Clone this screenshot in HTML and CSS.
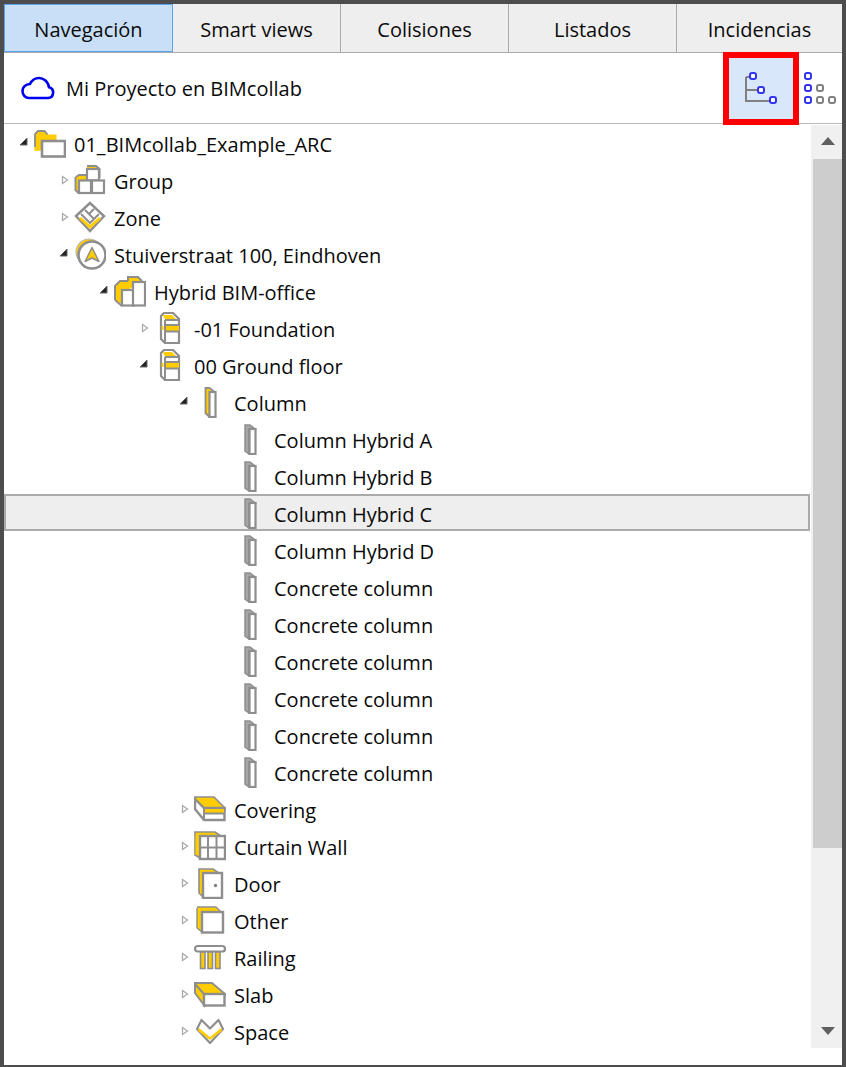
FILE: index.html
```html
<!DOCTYPE html>
<html lang="es">
<head>
  <meta charset="UTF-8">
  <meta name="viewport" content="width=device-width, initial-scale=1.0">
  <title>Navegación - BIMcollab</title>
  <link rel="stylesheet" href="styles.css">
</head>
<body>
  <!-- iconos del árbol -->
  <svg class="defs" width="0" height="0" aria-hidden="true">
    <symbol id="open" viewBox="0 0 16 16"><path d="M9 3v7H2z" fill="#222" stroke="#666" stroke-width="1"/></symbol>
    <symbol id="closed" viewBox="0 0 16 16"><path d="M4.500 4.500l5 3.500-5 3.500z" fill="#fff" stroke="#aaa" stroke-width="1.300"/></symbol>

    <symbol id="folder" viewBox="0 0 32 32">
      <path d="M0.500 24V7l3-3.500h7l3 4h9v7H8v9z" fill="#fc0"/>
      <path d="M1 20V7l3-3h6.500l3 3.500" fill="none" stroke="#8e8e8e" stroke-width="1.800"/>
      <rect x="8" y="14" width="23" height="15.500" fill="#fff" stroke="#8e8e8e" stroke-width="2.600"/>
    </symbol>
    <symbol id="group" viewBox="0 0 32 32">
      <path d="M1 26V13l4-2h8V3h10l3 3v8l-22 14z" fill="#fc0"/>
      <path d="M1.500 13v13l3 3M2 13l3-2h7M13 2h9l3.500 3v9" fill="none" stroke="#8e8e8e" stroke-width="2"/>
      <rect x="13" y="5" width="12" height="11.500" fill="#fff" stroke="#8e8e8e" stroke-width="2.200"/>
      <rect x="5" y="16.500" width="12" height="12.500" fill="#fff" stroke="#8e8e8e" stroke-width="2.200"/>
      <rect x="18" y="16.500" width="12" height="12.500" fill="#fff" stroke="#8e8e8e" stroke-width="2.200"/>
    </symbol>
    <symbol id="zone" viewBox="0 0 32 32">
      <path d="M2 15L16 2l14 13-14 15z" fill="#fff" stroke="#8e8e8e" stroke-width="2.400"/>
      <path d="M5 18l11 10 11-10-2-2-9 8-9-8z" fill="#fc0"/>
      <path d="M7 13l9 9 9-9M11 9l9 9M15 13l5-5" fill="none" stroke="#8e8e8e" stroke-width="2"/>
    </symbol>
    <symbol id="site" viewBox="0 0 32 32">
      <circle cx="15" cy="14" r="13" fill="#fc0" stroke="#bbb" stroke-width="1.200"/>
      <circle cx="18" cy="17" r="13.500" fill="#fff" stroke="#8e8e8e" stroke-width="2.600"/>
      <path d="M18 9.500l7 14-7-3.500-7 3.500z" fill="#fc0" stroke="#8e8e8e" stroke-width="1.400" stroke-linejoin="round"/>
    </symbol>
    <symbol id="building" viewBox="0 0 32 32">
      <path d="M1 11l5-5h9V1h9l4 5-14 9H9v15l-8-5z" fill="#fc0"/>
      <path d="M1 25V11l5-5h8M14 6V2h10l4 4M1 25l7 6" fill="none" stroke="#8e8e8e" stroke-width="2"/>
      <rect x="8" y="15" width="12" height="15.500" fill="#fff" stroke="#8e8e8e" stroke-width="2.200"/>
      <rect x="19" y="7" width="12" height="23.500" fill="#fff" stroke="#8e8e8e" stroke-width="2.200"/>
    </symbol>
    <symbol id="storey" viewBox="0 0 32 32">
      <path d="M7 27V4l3-3h9l6 6v24H11z" fill="#fff" stroke="#8e8e8e" stroke-width="2.200"/>
      <path d="M9 3h9l5 5H11z" fill="#fc0"/>
      <path d="M11 14h14v5H11z" fill="#fc0"/>
      <path d="M11 8h14M11 13h14M11 19.500h14M11 8v23" fill="none" stroke="#8e8e8e" stroke-width="2"/>
      <path d="M8.500 14v4" stroke="#fc0" stroke-width="2"/>
    </symbol>
    <symbol id="type" viewBox="0 0 32 32">
      <path d="M11.500 28V1.500h4l3 4H15v25z" fill="#fc0"/>
      <path d="M11.500 28V2h4l5 4M11.500 27l4 4" fill="none" stroke="#8e8e8e" stroke-width="1.800"/>
      <rect x="15.500" y="6" width="6" height="25" fill="#fff" stroke="#8e8e8e" stroke-width="2.200"/>
    </symbol>
    <symbol id="column" viewBox="0 0 32 32">
      <path d="M11 28V2h5l5 4H15v25z" fill="#a6a6a6" stroke="#8e8e8e" stroke-width="1.500"/>
      <rect x="15.500" y="6" width="6" height="25" fill="#fff" stroke="#8e8e8e" stroke-width="2.200"/>
    </symbol>
    <symbol id="covering" viewBox="0 0 32 32">
      <path d="M1 6V4h19l11 11v2H10z" fill="#fc0" stroke="#8e8e8e" stroke-width="1.600"/>
      <path d="M1 6v10l9 11h20.500V15H10z" fill="#fff" stroke="#8e8e8e" stroke-width="2.400"/>
      <path d="M10 16h20v4H10z" fill="#fc0"/>
      <path d="M10 15v12M10 20.500h20" fill="none" stroke="#8e8e8e" stroke-width="2"/>
    </symbol>
    <symbol id="curtain" viewBox="0 0 32 32">
      <path d="M1 25V2h20l6 4H6v22z" fill="#fc0" stroke="#8e8e8e" stroke-width="1.600"/>
      <rect x="6" y="6" width="25" height="23" fill="#fff" stroke="#8e8e8e" stroke-width="2.400"/>
      <path d="M14 6v23M22.500 6v23M6 17.500h25" fill="none" stroke="#8e8e8e" stroke-width="2"/>
      <path d="M3 5v20" stroke="#fc0" stroke-width="3"/>
    </symbol>
    <symbol id="door" viewBox="0 0 32 32">
      <path d="M5 26V2h14l6 4H9v24z" fill="#fc0" stroke="#8e8e8e" stroke-width="1.600"/>
      <rect x="9" y="6" width="19" height="25" fill="#fff" stroke="#8e8e8e" stroke-width="2.400"/>
      <circle cx="21.500" cy="18.500" r="1.700" fill="#808080"/>
    </symbol>
    <symbol id="other" viewBox="0 0 32 32">
      <path d="M3 24V3h19l6 5H8v20z" fill="#fc0"/>
      <path d="M3 24V4M3 3h19l5 5M3 24l5 4" fill="none" stroke="#8e8e8e" stroke-width="1.400"/>
      <rect x="8" y="8" width="21" height="20.500" fill="#fff" stroke="#8e8e8e" stroke-width="2.400"/>
    </symbol>
    <symbol id="railing" viewBox="0 0 32 32">
      <rect x="1" y="5" width="30" height="5.500" rx="2.700" fill="#fff" stroke="#8e8e8e" stroke-width="2.200"/>
      <rect x="6.500" y="11" width="4.500" height="16.500" fill="#fc0" stroke="#8e8e8e" stroke-width="1.600"/>
      <rect x="14" y="11" width="4.500" height="16.500" fill="#fc0" stroke="#8e8e8e" stroke-width="1.600"/>
      <rect x="21.500" y="11" width="4.500" height="16.500" fill="#fc0" stroke="#8e8e8e" stroke-width="1.600"/>
    </symbol>
    <symbol id="slab" viewBox="0 0 32 32">
      <path d="M1 6V5h17l13 11v1H10z" fill="#fc0" stroke="#8e8e8e" stroke-width="1.800"/>
      <path d="M1 6l9 10v11L1 15z" fill="#fc0" stroke="#8e8e8e" stroke-width="2"/>
      <rect x="10" y="16" width="20.500" height="11.500" fill="#fff" stroke="#8e8e8e" stroke-width="2.400"/>
    </symbol>
    <symbol id="space" viewBox="0 0 32 32">
      <path d="M3 14l4.500-9L16 13.500 24.500 5 29 14 16 28z" fill="#fff" stroke="#8e8e8e" stroke-width="2.200" stroke-linejoin="round"/>
      <path d="M4 16l12 9 12-9-1-3-11 9-11-9z" fill="#fc0"/>
    </symbol>
  </svg>

  <nav class="tabs">
    <div class="tab active">Navegación</div>
    <div class="tab">Smart views</div>
    <div class="tab">Colisiones</div>
    <div class="tab">Listados</div>
    <div class="tab last">Incidencias</div>
  </nav>

  <div class="toolbar">
    <svg class="cloud" width="34" height="24" viewBox="0 0 34 24">
      <path d="M8 22h19a5.500 5.500 0 0 0 1-10.800C27 5 22 2 18 2c-4 0-7 2-9 6-4.500 0-7.500 3.500-7.500 7S4 22 8 22z" fill="none" stroke="#0000f0" stroke-width="2.600"/>
    </svg>
    <span class="project">Mi Proyecto en BIMcollab</span>
    <button class="view-btn" type="button">
      <svg width="36" height="33" viewBox="0 0 36 33">
        <path d="M3 5v24h24M3 5h4M3 18h12" fill="none" stroke="#808080" stroke-width="2"/>
        <rect x="7" y="1" width="6" height="6" rx="2" fill="#fff" stroke="#3333ee" stroke-width="2"/>
        <rect x="15" y="15" width="6" height="6" rx="2" fill="#fff" stroke="#3333ee" stroke-width="2"/>
        <rect x="27" y="25" width="6" height="6" rx="2" fill="#fff" stroke="#3333ee" stroke-width="2"/>
      </svg>
    </button>
    <svg class="flat" width="36" height="33" viewBox="0 0 36 33">
      <rect x="2" y="1" width="6" height="6" rx="2" fill="#fff" stroke="#3333ee" stroke-width="2"/>
      <rect x="2" y="13" width="6" height="6" rx="2" fill="#fff" stroke="#3333ee" stroke-width="2"/>
      <rect x="14" y="13" width="6" height="6" rx="2" fill="#fff" stroke="#808080" stroke-width="2"/>
      <rect x="2" y="25" width="6" height="6" rx="2" fill="#fff" stroke="#3333ee" stroke-width="2"/>
      <rect x="14" y="25" width="6" height="6" rx="2" fill="#fff" stroke="#808080" stroke-width="2"/>
      <rect x="26" y="25" width="6" height="6" rx="2" fill="#fff" stroke="#808080" stroke-width="2"/>
    </svg>
  </div>

  <div class="content">
    <ul class="tree">
      <li class="row lvl0"><svg class="tog"><use href="#open"/></svg><svg class="ico"><use href="#folder"/></svg><span>01_BIMcollab_Example_ARC</span></li>
      <li class="row lvl1"><svg class="tog"><use href="#closed"/></svg><svg class="ico"><use href="#group"/></svg><span>Group</span></li>
      <li class="row lvl1"><svg class="tog"><use href="#closed"/></svg><svg class="ico"><use href="#zone"/></svg><span>Zone</span></li>
      <li class="row lvl1"><svg class="tog"><use href="#open"/></svg><svg class="ico"><use href="#site"/></svg><span>Stuiverstraat 100, Eindhoven</span></li>
      <li class="row lvl2"><svg class="tog"><use href="#open"/></svg><svg class="ico"><use href="#building"/></svg><span>Hybrid BIM-office</span></li>
      <li class="row lvl3"><svg class="tog"><use href="#closed"/></svg><svg class="ico"><use href="#storey"/></svg><span>-01 Foundation</span></li>
      <li class="row lvl3"><svg class="tog"><use href="#open"/></svg><svg class="ico"><use href="#storey"/></svg><span>00 Ground floor</span></li>
      <li class="row lvl4"><svg class="tog"><use href="#open"/></svg><svg class="ico"><use href="#type"/></svg><span>Column</span></li>
      <li class="row lvl5"><svg class="tog"></svg><svg class="ico"><use href="#column"/></svg><span>Column Hybrid A</span></li>
      <li class="row lvl5"><svg class="tog"></svg><svg class="ico"><use href="#column"/></svg><span>Column Hybrid B</span></li>
      <li class="row lvl5 selected"><svg class="tog"></svg><svg class="ico"><use href="#column"/></svg><span>Column Hybrid C</span></li>
      <li class="row lvl5"><svg class="tog"></svg><svg class="ico"><use href="#column"/></svg><span>Column Hybrid D</span></li>
      <li class="row lvl5"><svg class="tog"></svg><svg class="ico"><use href="#column"/></svg><span>Concrete column</span></li>
      <li class="row lvl5"><svg class="tog"></svg><svg class="ico"><use href="#column"/></svg><span>Concrete column</span></li>
      <li class="row lvl5"><svg class="tog"></svg><svg class="ico"><use href="#column"/></svg><span>Concrete column</span></li>
      <li class="row lvl5"><svg class="tog"></svg><svg class="ico"><use href="#column"/></svg><span>Concrete column</span></li>
      <li class="row lvl5"><svg class="tog"></svg><svg class="ico"><use href="#column"/></svg><span>Concrete column</span></li>
      <li class="row lvl5"><svg class="tog"></svg><svg class="ico"><use href="#column"/></svg><span>Concrete column</span></li>
      <li class="row lvl4"><svg class="tog"><use href="#closed"/></svg><svg class="ico"><use href="#covering"/></svg><span>Covering</span></li>
      <li class="row lvl4"><svg class="tog"><use href="#closed"/></svg><svg class="ico"><use href="#curtain"/></svg><span>Curtain Wall</span></li>
      <li class="row lvl4"><svg class="tog"><use href="#closed"/></svg><svg class="ico"><use href="#door"/></svg><span>Door</span></li>
      <li class="row lvl4"><svg class="tog"><use href="#closed"/></svg><svg class="ico"><use href="#other"/></svg><span>Other</span></li>
      <li class="row lvl4"><svg class="tog"><use href="#closed"/></svg><svg class="ico"><use href="#railing"/></svg><span>Railing</span></li>
      <li class="row lvl4"><svg class="tog"><use href="#closed"/></svg><svg class="ico"><use href="#slab"/></svg><span>Slab</span></li>
      <li class="row lvl4"><svg class="tog"><use href="#closed"/></svg><svg class="ico"><use href="#space"/></svg><span>Space</span></li>
    </ul>
    <div class="scrollbar">
      <div class="arrow-up"></div>
      <div class="thumb"></div>
      <div class="arrow-down"></div>
    </div>
  </div>
</body>
</html>
```

FILE: styles.css
```css
html, body {
  height: 100%;
}
body {
  margin: 0;
  box-sizing: border-box;
  height: 1067px;
  background-color: white;
  border: solid #4d4d4d;
  border-width: 4px 4px 2px 4px;
  font-family: "Open Sans", "Noto Sans", sans-serif;
  font-size: 20px;
  color: #0a0a0a;
  overflow: hidden;
}
.defs {
  position: absolute;
}
.tabs {
  box-sizing: border-box;
  display: flex;
  height: 49px;
  border-bottom: 1px solid #aaa;
}
.tab {
  flex: 0 0 168px;
  box-sizing: border-box;
  display: flex;
  align-items: center;
  justify-content: center;
  padding-top: 3px;
  background-color: #eeeeee;
  border-right: 1px solid #aaa;
}
.tab.last {
  flex: 1;
  border-right: none;
}
.tab.active {
  flex-basis: 169px;
  background-color: #c8dff7;
  border: 1px solid #5aa5ef;
}
.toolbar {
  display: flex;
  align-items: center;
  height: 70px;
  border-bottom: 1px solid #bbb;
  padding-left: 17px;
}
.cloud {
  margin-right: 11px;
}
.project {
  flex: 1;
  padding-top: 1px;
}
.view-btn {
  box-sizing: border-box;
  width: 76px;
  height: 73px;
  margin: -1px 4px -2px 0;
  padding: 0;
  border: 6px solid #ff0000;
  background-color: #d8e8fa;
  position: relative;
  display: flex;
  align-items: center;
  justify-content: center;
}
.flat {
  margin-right: 3px;
}
.content {
  display: flex;
  height: 941px;
}
.tree {
  list-style: none;
  margin: 0;
  padding: 0;
  width: 806px;
  flex: none;
}
.row {
  box-sizing: border-box;
  display: flex;
  align-items: flex-start;
  height: 37px;
}
.row span {
  margin-left: 8px;
  line-height: 42px;
  white-space: nowrap;
}
.tog {
  width: 16px;
  height: 16px;
  margin-top: 11px;
  flex: none;
}
.ico {
  width: 32px;
  height: 32px;
  margin-top: 3px;
  flex: none;
}
.lvl0 { padding-left: 14px; }
.lvl1 { padding-left: 54px; }
.lvl2 { padding-left: 94px; }
.lvl3 { padding-left: 134px; }
.lvl4 { padding-left: 174px; }
.lvl5 { padding-left: 214px; }
.selected {
  background-color: #eeeeee;
  outline: 2px solid #aaa;
  outline-offset: -2px;
}
.scrollbar {
  box-sizing: border-box;
  margin: 1px 0 0 1px;
  width: 31px;
  height: 923px;
  background-color: #f0f0f0;
  padding-left: 2px;
  display: flex;
  flex-direction: column;
}
.thumb {
  height: 689px;
  background-color: #cdcdcd;
}
.arrow-up, .arrow-down {
  width: 0;
  height: 0;
  border-left: 7.500px solid transparent;
  border-right: 7.500px solid transparent;
  align-self: center;
}
.arrow-up {
  border-bottom: 8px solid #606060;
  margin: 12px 0 14px;
}
.arrow-down {
  border-top: 8px solid #606060;
  margin-top: 179px;
}
```
